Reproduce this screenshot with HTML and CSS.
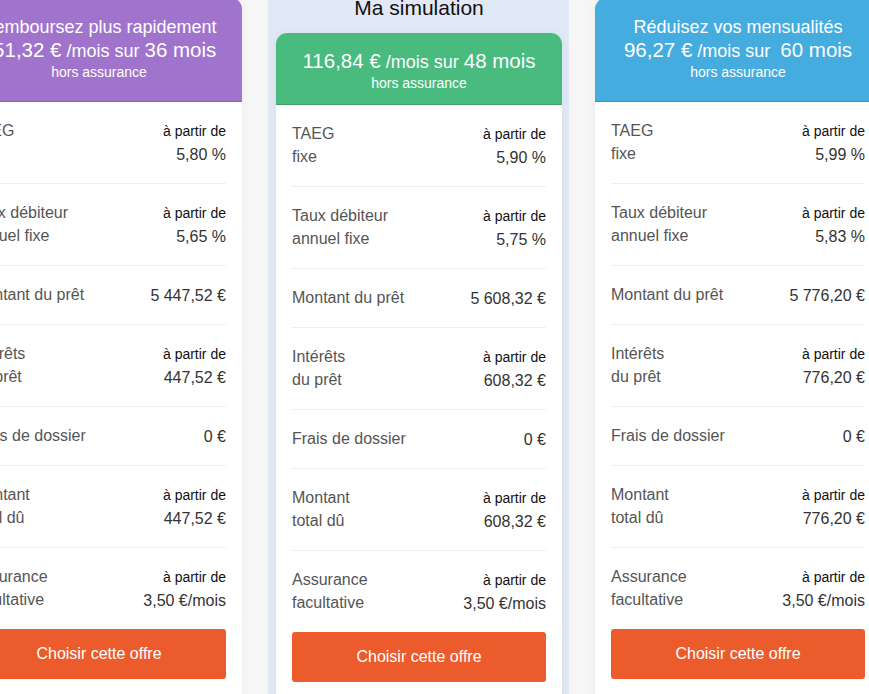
FILE: index.html
```html
<!DOCTYPE html>
<html lang="fr">
<head>
<meta charset="utf-8">
<title>Ma simulation</title>
<link rel="stylesheet" href="styles.css">
</head>
<body>
<main class="offers">
  <section class="card card--purple">
    <header class="card-head">
      <div class="head-title">Remboursez plus rapidement</div>
      <div class="head-price"><span class="big">151,32 €</span> /mois sur <span class="big">36 mois</span></div>
      <div class="head-note">hors assurance</div>
    </header>
    <div class="card-body">
      <div class="row"><div class="label">TAEG<br>fixe</div><div class="val"><span class="from">à partir de</span><span class="num">5,80 %</span></div></div>
      <div class="row"><div class="label">Taux débiteur<br>annuel fixe</div><div class="val"><span class="from">à partir de</span><span class="num">5,65 %</span></div></div>
      <div class="row"><div class="label">Montant du prêt</div><div class="val"><span class="num">5 447,52 €</span></div></div>
      <div class="row"><div class="label">Intérêts<br>du prêt</div><div class="val"><span class="from">à partir de</span><span class="num">447,52 €</span></div></div>
      <div class="row"><div class="label">Frais de dossier</div><div class="val"><span class="num">0 €</span></div></div>
      <div class="row"><div class="label">Montant<br>total dû</div><div class="val"><span class="from">à partir de</span><span class="num">447,52 €</span></div></div>
      <div class="row row--last"><div class="label">Assurance<br>facultative</div><div class="val"><span class="from">à partir de</span><span class="num">3,50 €/mois</span></div></div>
      <button class="choose">Choisir cette offre</button>
    </div>
  </section>

  <div class="panel">
    <h2 class="panel-title">Ma simulation</h2>
    <section class="card card--green">
      <header class="card-head">
        <div class="head-price"><span class="big">116,84 €</span> /mois sur <span class="big">48 mois</span></div>
        <div class="head-note">hors assurance</div>
      </header>
      <div class="card-body">
        <div class="row"><div class="label">TAEG<br>fixe</div><div class="val"><span class="from">à partir de</span><span class="num">5,90 %</span></div></div>
        <div class="row"><div class="label">Taux débiteur<br>annuel fixe</div><div class="val"><span class="from">à partir de</span><span class="num">5,75 %</span></div></div>
        <div class="row"><div class="label">Montant du prêt</div><div class="val"><span class="num">5 608,32 €</span></div></div>
        <div class="row"><div class="label">Intérêts<br>du prêt</div><div class="val"><span class="from">à partir de</span><span class="num">608,32 €</span></div></div>
        <div class="row"><div class="label">Frais de dossier</div><div class="val"><span class="num">0 €</span></div></div>
        <div class="row"><div class="label">Montant<br>total dû</div><div class="val"><span class="from">à partir de</span><span class="num">608,32 €</span></div></div>
        <div class="row row--last"><div class="label">Assurance<br>facultative</div><div class="val"><span class="from">à partir de</span><span class="num">3,50 €/mois</span></div></div>
        <button class="choose">Choisir cette offre</button>
      </div>
    </section>
  </div>

  <section class="card card--blue">
    <header class="card-head">
      <div class="head-title">Réduisez vos mensualités</div>
      <div class="head-price"><span class="big">96,27 €</span> /mois sur&nbsp; <span class="big">60 mois</span></div>
      <div class="head-note">hors assurance</div>
    </header>
    <div class="card-body">
      <div class="row"><div class="label">TAEG<br>fixe</div><div class="val"><span class="from">à partir de</span><span class="num">5,99 %</span></div></div>
      <div class="row"><div class="label">Taux débiteur<br>annuel fixe</div><div class="val"><span class="from">à partir de</span><span class="num">5,83 %</span></div></div>
      <div class="row"><div class="label">Montant du prêt</div><div class="val"><span class="num">5 776,20 €</span></div></div>
      <div class="row"><div class="label">Intérêts<br>du prêt</div><div class="val"><span class="from">à partir de</span><span class="num">776,20 €</span></div></div>
      <div class="row"><div class="label">Frais de dossier</div><div class="val"><span class="num">0 €</span></div></div>
      <div class="row"><div class="label">Montant<br>total dû</div><div class="val"><span class="from">à partir de</span><span class="num">776,20 €</span></div></div>
      <div class="row row--last"><div class="label">Assurance<br>facultative</div><div class="val"><span class="from">à partir de</span><span class="num">3,50 €/mois</span></div></div>
      <button class="choose">Choisir cette offre</button>
    </div>
  </section>
</main>
</body>
</html>
```

FILE: styles.css
```css
html, body {
  margin: 0;
  padding: 0;
  background: #f6f6f6;
  overflow: hidden;
}

body {
  font-family: "Liberation Sans", Arial, sans-serif;
  color: #333;
}

.offers {
  display: flex;
  align-items: flex-start;
  gap: 26px;
  margin: -2px 0 0 -44px;
}

.card {
  flex: 0 0 286px;
  width: 286px;
  background: #fff;
  border-radius: 11px 11px 0 0;
  overflow: hidden;
  box-shadow: 0 0 10px rgba(0, 0, 0, 0.05);
}

.card-head {
  color: #fff;
  text-align: center;
  padding: 18px 12px 20px;
  border-bottom: 1px solid rgba(0, 0, 0, 0.12);
}

.card--purple .card-head { background: #a074cc; }
.card--green .card-head { background: #49bb7e; padding: 16px 12px 12px; }
.card--blue .card-head { background: #45acdf; }

.head-title {
  font-size: 18px;
  line-height: 22px;
  white-space: nowrap;
}

.head-price {
  font-size: 18px;
  line-height: 24px;
  white-space: nowrap;
}

.head-price .big {
  font-size: 20.5px;
}

.head-note {
  font-size: 14px;
  line-height: 18px;
}

.panel {
  flex: 0 0 auto;
  width: 286px;
  padding: 0 7px 20px 8px;
  background: #e1e8f6;
}

.panel-title {
  margin: 0 0 15px;
  font-size: 21px;
  line-height: 20px;
  font-weight: normal;
  color: #111;
  text-align: center;
}

.card-body {
  padding: 0 16px 20px;
}

.row {
  display: flex;
  justify-content: space-between;
  align-items: flex-start;
  padding: 17px 0 18px;
  border-bottom: 1px solid #eeeeee;
}

.row--last {
  border-bottom: none;
}

.label {
  font-size: 16px;
  line-height: 23px;
  color: #555;
}

.val {
  display: flex;
  flex-direction: column;
  align-items: flex-end;
  padding-top: 1px;
  margin-bottom: -1px;
  text-align: right;
}

.from {
  font-size: 14px;
  line-height: 23px;
  color: #111;
}

.num {
  font-size: 16px;
  line-height: 23px;
  color: #333;
}

.choose {
  display: block;
  width: 100%;
  height: 50px;
  border: none;
  border-radius: 3px;
  background: #ec5b2c;
  color: #fff;
  font-family: "Liberation Sans", Arial, sans-serif;
  font-size: 16px;
  cursor: pointer;
}
```
